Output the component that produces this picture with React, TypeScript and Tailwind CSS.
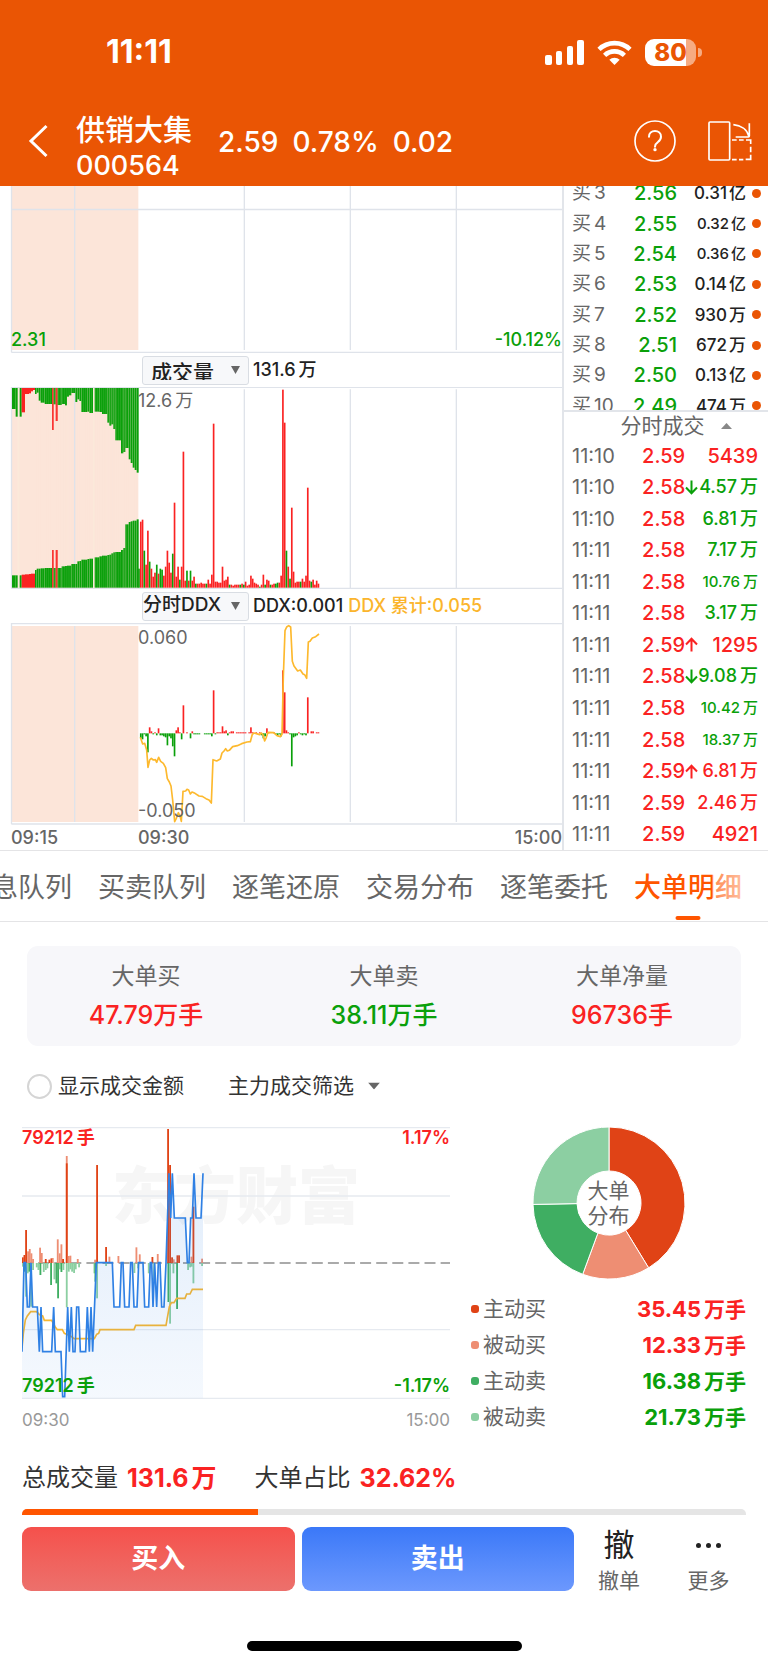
import React from 'react';

type Tone = 'r' | 'g';

const tone = { r: '#fa2222', g: '#0aa00a' };

/* ---------- market data ---------- */

const bids = [
  { level: '3', price: '2.56', volume: '0.31', unit: '亿', small: false },
  { level: '4', price: '2.55', volume: '0.32', unit: '亿', small: true },
  { level: '5', price: '2.54', volume: '0.36', unit: '亿', small: true },
  { level: '6', price: '2.53', volume: '0.14', unit: '亿', small: false },
  { level: '7', price: '2.52', volume: '930', unit: '万', small: false },
  { level: '8', price: '2.51', volume: '672', unit: '万', small: false },
  { level: '9', price: '2.50', volume: '0.13', unit: '亿', small: false },
  { level: '10', price: '2.49', volume: '474', unit: '万', small: false },
];

const trades: { time: string; price: string; arrow?: 'up' | 'down'; volume: string; unit?: string; side: Tone; size: string }[] = [
  { time: '11:10', price: '2.59', volume: '5439', side: 'r', size: 'text-[20px]' },
  { time: '11:10', price: '2.58', arrow: 'down', volume: '4.57', unit: '万', side: 'g', size: 'text-[18px]' },
  { time: '11:10', price: '2.58', volume: '6.81', unit: '万', side: 'g', size: 'text-[18px]' },
  { time: '11:11', price: '2.58', volume: '7.17', unit: '万', side: 'g', size: 'text-[18px]' },
  { time: '11:11', price: '2.58', volume: '10.76', unit: '万', side: 'g', size: 'text-[15px]' },
  { time: '11:11', price: '2.58', volume: '3.17', unit: '万', side: 'g', size: 'text-[18px]' },
  { time: '11:11', price: '2.59', arrow: 'up', volume: '1295', side: 'r', size: 'text-[20px]' },
  { time: '11:11', price: '2.58', arrow: 'down', volume: '9.08', unit: '万', side: 'g', size: 'text-[18px]' },
  { time: '11:11', price: '2.58', volume: '10.42', unit: '万', side: 'g', size: 'text-[15px]' },
  { time: '11:11', price: '2.58', volume: '18.37', unit: '万', side: 'g', size: 'text-[15px]' },
  { time: '11:11', price: '2.59', arrow: 'up', volume: '6.81', unit: '万', side: 'r', size: 'text-[18px]' },
  { time: '11:11', price: '2.59', volume: '2.46', unit: '万', side: 'r', size: 'text-[18px]' },
  { time: '11:11', price: '2.59', volume: '4921', side: 'r', size: 'text-[20px]' },
];

const tabs = ['息队列', '买卖队列', '逐笔还原', '交易分布', '逐笔委托', '大单明细'];

const stats = [
  { label: '大单买', value: '47.79万手', color: 'text-[#fa2222]' },
  { label: '大单卖', value: '38.11万手', color: 'text-[#0aa00a]' },
  { label: '大单净量', value: '96736手', color: 'text-[#fa2222]' },
];

const legend = [
  { label: '主动买', value: '35.45', dot: 'bg-[#e04316]', color: 'text-[#fa2222]' },
  { label: '被动买', value: '12.33', dot: 'bg-[#ee8e73]', color: 'text-[#fa2222]' },
  { label: '主动卖', value: '16.38', dot: 'bg-[#3fae62]', color: 'text-[#0aa00a]' },
  { label: '被动卖', value: '21.73', dot: 'bg-[#8ccfa2]', color: 'text-[#0aa00a]' },
];

// call auction: [x from, x to, lower edge of the top bar, upper edge of the bottom bar, tone]
const auction: [number, number, number, number, Tone][] = [
  [36, 47, 117, 616, 'g'], [47, 53, 140, 616, 'g'], [59, 65, 140, 616, 'g'], [65, 75, 127, 614, 'r'],
  [75, 87, 72, 613, 'r'], [87, 93, 70, 612, 'r'], [93, 99, 64, 611, 'r'], [99, 105, 60, 611, 'r'],
  [105, 110, 72, 600, 'g'], [110, 116, 68, 596, 'g'], [116, 122, 92, 596, 'g'], [122, 134, 98, 595, 'g'],
  [134, 156, 102, 594, 'g'], [156, 161, 180, 540, 'r'], [161, 167, 103, 594, 'g'], [167, 173, 153, 540, 'r'],
  [173, 185, 105, 594, 'g'], [185, 195, 102, 589, 'g'], [195, 201, 106, 588, 'g'], [201, 207, 80, 587, 'g'],
  [207, 214, 76, 587, 'g'], [214, 226, 69, 582, 'g'], [226, 232, 96, 582, 'g'], [232, 238, 88, 574, 'g'],
  [238, 244, 93, 573, 'g'], [244, 262, 126, 569, 'g'], [262, 268, 125, 567, 'g'], [268, 279, 129, 566, 'g'],
  [284, 298, 125, 562, 'g'], [298, 306, 126, 559, 'g'], [306, 322, 132, 557, 'g'], [322, 328, 158, 555, 'g'],
  [328, 334, 167, 554, 'g'], [334, 340, 163, 550, 'g'], [340, 346, 177, 547, 'g'], [346, 363, 211, 546, 'g'],
  [363, 370, 250, 540, 'g'], [370, 376, 246, 534, 'g'], [376, 386, 234, 463, 'g'], [386, 392, 268, 456, 'g'],
  [392, 398, 279, 454, 'g'], [398, 404, 293, 452, 'g'], [404, 410, 300, 452, 'g'], [410, 416, 308, 448, 'g'],
];

// one bar a minute from 09:30, negative for green
const volumes = [
  -19, 66, 68, -37, 23, 57, -26, 19, 11, 15, -23, 14, -19, -18, 12, 21, 37, 25, 15, -34, 85, 11, 21, -8, 21, 136, 7,
  -17, 7, -17, 7, 11, -4, 4, 4, 5, 4, 4, -4, 8, 4, 13, 164, 6, 6, 5, 5, 21, 7, 8, 11, -3, 3, 2, 3, 3, 3, -3, 4, -3, 6,
  2, 3, 12, 9, 5, 4, 3, -1, 3, 13, -3, 8, 7, -3, 3, 4, -4, -5, 5, 12, 198, 165, -37, 21, -9, 80, 16, 5, 6, 6, -6, 9,
  6, 12, 100, 7, -6, 8, 3, 7, 4,
];

const ddx = [
  0, -5, -6, -1, -3, -19, 6, 2, -1, 1, -2, 5, -2, -2, -3, -4, -12, -3, -5, -13, -23, 3, 6, 1, -6, 28, 0, 1, 0, -5, 2,
  -1, -1, -1, -1, 0, 0, -1, -1, -1, -1, -3, 43, -1, 1, 1, 1, 7, 2, 3, -2, 1, 2, 2, 0, 1, 1, 1, 1, 1, 1, 0, 1, 6, 1, 0,
  1, 0, 1, -2, -5, -3, 5, 1, 0, 0, 1, -1, -2, -1, -3, 63, 41, 3, 1, -1, -33, -4, -3, -2, 1, -1, -2, -1, -2, 36, 0, 2,
  2, 0, 1, 1,
];

const ddxLine =
  '421,442 428,462 434,460 440,480 444,532 449,510 454,505 460,510 466,509 470,517 476,502 482,514 490,520 497,533 502,566 508,576 513,588 518,630 524,695 529,685 535,668 540,678 544,694 549,604 557,603 561,598 566,600 571,612 576,606 585,610 597,618 607,619 618,626 627,630 634,639 639,509 650,513 661,507 666,489 672,483 677,476 682,483 688,481 698,470 712,467 725,461 741,456 751,455 757,433 762,429 769,431 779,434 784,429 789,434 794,453 799,442 804,427 821,428 831,437 841,440 846,433 850,260 855,122 860,111 866,107 872,111 877,214 882,228 893,243 901,240 909,252 914,254 920,265 925,156 930,154 937,144 947,140 957,132';

const flow: [number, number, string][] = [
  [68, 442, '#e04316'], [73, 435, '#e04316'], [78, 360, '#e04316'], [84, 424, '#ee8e73'], [89, 417, '#ee8e73'],
  [94, 430, '#ee8e73'], [99, 447, '#ee8e73'], [120, 413, '#ee8e73'], [125, 429, '#ee8e73'], [137, 447, '#e04316'],
  [148, 449, '#e04316'], [154, 445, '#e04316'], [158, 444, '#ee8e73'], [173, 388, '#ee8e73'], [179, 430, '#ee8e73'],
  [184, 403, '#ee8e73'], [189, 447, '#e04316'], [200, 138, '#ee8e73'], [200, 160, '#e04316'], [206, 438, '#ee8e73'],
  [211, 437, '#ee8e73'], [233, 447, '#ee8e73'], [285, 449, '#ee8e73'], [291, 165, '#e04316'], [318, 411, '#e04316'],
  [328, 440, '#ee8e73'], [355, 438, '#ee8e73'], [409, 412, '#ee8e73'], [419, 433, '#ee8e73'], [457, 441, '#e04316'],
  [473, 432, '#ee8e73'], [504, 57, '#e04316'], [510, 165, '#e04316'], [516, 442, '#e04316'], [521, 448, '#ee8e73'],
  [532, 436, '#e04316'], [537, 436, '#e04316'], [574, 440, '#ee8e73'], [580, 290, '#e04316'], [606, 446, '#ee8e73'],
  [68, 470, '#8ccfa2'], [73, 485, '#3fae62'], [78, 560, '#8ccfa2'], [83, 490, '#8ccfa2'], [88, 485, '#3fae62'],
  [93, 590, '#8ccfa2'], [99, 480, '#8ccfa2'], [110, 472, '#8ccfa2'], [115, 480, '#8ccfa2'], [121, 495, '#3fae62'],
  [131, 486, '#8ccfa2'], [137, 480, '#8ccfa2'], [142, 475, '#8ccfa2'], [153, 525, '#3fae62'], [163, 508, '#8ccfa2'],
  [169, 520, '#3fae62'], [174, 565, '#3fae62'], [179, 478, '#8ccfa2'], [184, 486, '#3fae62'], [190, 480, '#8ccfa2'],
  [200, 592, '#8ccfa2'], [206, 485, '#8ccfa2'], [211, 478, '#8ccfa2'], [216, 485, '#8ccfa2'], [222, 489, '#8ccfa2'],
  [227, 478, '#8ccfa2'], [237, 472, '#8ccfa2'], [283, 490, '#8ccfa2'], [286, 515, '#3fae62'], [291, 565, '#8ccfa2'],
  [318, 468, '#8ccfa2'], [403, 489, '#8ccfa2'], [414, 475, '#8ccfa2'], [446, 490, '#8ccfa2'], [462, 515, '#8ccfa2'],
  [505, 576, '#3fae62'], [510, 641, '#8ccfa2'], [520, 490, '#8ccfa2'], [531, 597, '#3fae62'], [564, 480, '#8ccfa2'],
  [570, 472, '#8ccfa2'], [575, 470, '#8ccfa2'], [580, 520, '#8ccfa2'], [606, 468, '#8ccfa2'],
];

const priceLine =
  '66,725 72,458 77,458 82,591 88,591 93,458 98,591 112,591 118,725 123,591 128,725 155,725 161,591 166,725 183,725 188,860 194,860 203,591 208,725 214,591 219,725 225,725 230,591 236,591 241,725 257,725 262,591 268,725 273,591 278,725 289,458 337,458 342,591 359,591 364,458 369,458 374,591 387,591 392,458 397,458 402,591 411,591 416,458 429,458 434,591 446,591 451,458 455,458 459,591 464,458 470,591 475,458 480,458 485,591 492,591 498,458 507,190 512,324 517,190 523,324 556,324 562,458 567,458 572,324 577,324 582,190 588,324 603,324 609,190';

const averageLine =
  '66,715 70,670 76,630 82,618 92,605 110,605 118,614 128,618 133,631 155,631 165,650 172,659 187,659 193,670 205,675 215,680 222,686 283,686 290,673 296,670 300,659 402,659 407,646 498,646 508,590 514,578 522,578 530,565 555,565 560,552 570,552 577,538 609,538';

/* ---------- icons ---------- */

const SignalIcon = () => (
  <svg className="h-[25px] w-[39px]" viewBox="0 0 39 25" fill="#fff" aria-hidden="true">
    <rect x="0" y="15" width="7" height="10" rx="2" />
    <rect x="11" y="11" width="6" height="14" rx="2" />
    <rect x="22" y="6" width="6" height="19" rx="2" />
    <rect x="32" y="0" width="7" height="25" rx="2" />
  </svg>
);

const WifiIcon = () => (
  <svg className="h-[25px] w-[35px]" viewBox="0 0 35 25" fill="none" stroke="#fff" strokeWidth="4.6" aria-hidden="true">
    <path d="M2 9.3A22.5 22.5 0 0 1 33 9.3" />
    <path d="M7.6 15.4A14.3 14.3 0 0 1 27.4 15.4" />
    <path d="M17.5 25l-5.2-5.2a7.4 7.4 0 0 1 10.4 0z" fill="#fff" stroke="none" />
  </svg>
);

const HelpIcon = () => (
  <svg className="h-[42px] w-[42px]" viewBox="0 0 126 126" fill="none" stroke="#fff" strokeWidth="5" aria-hidden="true">
    <circle cx="63" cy="63" r="60" />
    <path d="M45 50c0-11 8-17 18-17s18 6 18 17c0 9-5 13-10 17-6 4-8 7-8 13" strokeWidth="6" strokeLinecap="round" />
    <circle cx="63" cy="89" r="5" fill="#fff" stroke="none" />
  </svg>
);

const RotateIcon = () => (
  <svg className="h-[40px] w-[44px]" viewBox="0 0 132 120" fill="none" stroke="#fff" strokeWidth="5" aria-hidden="true">
    <rect x="3" y="3" width="62" height="114" rx="3" />
    <path d="M76 11c22 2 42 14 47 36M124 7v38c0 3-1 3-3 3H83" />
    <path d="M72 57h14M93 57h14M114 57h14v12M128 77v17M128 101v14h-15M106 116H93M86 116H72" />
  </svg>
);

const Arrow: React.FC<{ dir: 'up' | 'down' }> = ({ dir }) => (
  <svg
    className={dir === 'up' ? 'h-[15px] w-[13px]' : 'h-[15px] w-[13px] rotate-180'}
    viewBox="0 0 13 15"
    fill="none"
    stroke="currentColor"
    strokeWidth="2"
    aria-hidden="true"
  >
    <path d="M6.500 14.500V2M1 7.500L6.500 1.800L12 7.500" />
  </svg>
);

const Caret: React.FC<{ className: string; up?: boolean }> = ({ className, up }) => (
  <svg className={className} viewBox="0 0 12 10" preserveAspectRatio="none" fill="currentColor" aria-hidden="true">
    <path d={up ? 'M6 0l6 10H0z' : 'M0 0h12L6 10z'} />
  </svg>
);

/* ---------- pieces ---------- */

const Header = () => (
  <header className="bg-[#ea5504] text-white">
    <div className="flex h-[104px] items-center justify-between pr-[66px] pl-[106px]">
      <span className="text-[32px] font-bold">11:11</span>
      <div className="flex items-center gap-[13px]">
        <SignalIcon />
        <WifiIcon />
        <div className="flex items-center gap-[2px]">
          <div className="flex h-[27px] w-[51px] items-center justify-center rounded-[9px] bg-[linear-gradient(to_right,#fff_80%,#f6ab82_80%)] text-[24px] leading-[27px] font-extrabold text-[#ea5504]">
            80
          </div>
          <span className="h-[9px] w-[4px] rounded-r-full bg-[#f6ab82]" />
        </div>
      </div>
    </div>
    <div className="flex h-[82px] items-start pr-[16px] pl-[28px]">
      <button type="button" aria-label="返回" className="mt-[20px]">
        <svg className="h-[34px] w-[20px]" viewBox="0 0 20 34" fill="none" stroke="#fff" strokeWidth="3" aria-hidden="true">
          <path d="M18.500 2L3 17L18.500 32" />
        </svg>
      </button>
      <div className="ml-[28px] pt-[10px]">
        <h1 className="text-[29px] leading-[34px] font-medium">供销大集</h1>
        <p className="text-[27px] leading-[36px] font-medium">000564</p>
      </div>
      <p className="ml-[26px] flex gap-[14px] text-[28px] leading-[76px] font-medium">
        <span>2.59</span>
        <span>0.78%</span>
        <span>0.02</span>
      </p>
      <div className="ml-auto flex items-center gap-[32px] pt-[16px]">
        <button type="button" aria-label="帮助">
          <HelpIcon />
        </button>
        <button type="button" aria-label="横屏">
          <RotateIcon />
        </button>
      </div>
    </div>
  </header>
);

const IndicatorSelect: React.FC<{ label: string; value: string; className: string }> = ({ label, value, className }) => (
  <div className="relative">
    <select
      aria-label={label}
      className={`block h-[29px] w-[107px] appearance-none rounded-[3px] border border-[#d9dde3] bg-[#f7f8fa] font-medium text-[#222] ${className}`}
    >
      <option>{value}</option>
    </select>
    <Caret className="pointer-events-none absolute top-[10px] right-[9px] h-[8px] w-[9px] text-[#666]" />
  </div>
);

const grid = { stroke: '#dfe3ea', strokeWidth: 4 };

const MinuteCharts = () => (
  <div className="min-w-0 flex-1 border-r-2 border-[#e2e5ea]">
    {/* price */}
    <div className="relative">
      <svg className="block w-full" viewBox="0 18 1686 501">
        <rect x="35" y="18" width="380" height="492" fill="#fce5d9" />
        <path d="M34.500 18V517M224 18V510M733 18V510M1051 18V510M1369 18V510M34 88.500H1686M34 517H1686" {...grid} />
      </svg>
      <span className="absolute bottom-[3px] left-[11px] text-[18px] leading-[20px] font-medium text-[#0aa00a]">2.31</span>
      <span className="absolute right-0 bottom-[3px] text-[18px] leading-[20px] font-medium text-[#0aa00a]">-10.12%</span>
    </div>

    {/* volume */}
    <div className="flex h-[34px] items-center pl-[142px]">
      <IndicatorSelect label="指标" value="成交量" className="pb-[4px] pl-[8px] text-[21px]" />
      <span className="ml-[4px] text-[18px] leading-[20px] font-medium text-[#222]">
        131.6<span className="ml-[3px]">万</span>
      </span>
    </div>
    <div className="relative">
      <svg className="block w-full" viewBox="0 51 1686 606">
        <rect x="35" y="54" width="380" height="600" fill="#fce5d9" />
        <path d="M34.500 51V655M224 58V655M733 58V655M1051 58V655M1369 58V655M34 52H1686M34 655H1686" {...grid} />
        <path d="M53 54H59V653H53zM279 54H284V653H279z" fill="#fbe9da" />
        {auction.map(([from, to, top, bottom, t]) => (
          <g key={from} fill={tone[t]}>
            <rect x={from} y="54" width={to - from} height={top - 54} />
            <rect x={from} y={bottom} width={to - from} height={653 - bottom} />
          </g>
        ))}
        {/* hairlines between the auction bars */}
        {Array.from({ length: 52 }, (_, i) => (
          <rect key={i} x={110 + i * 5.85} y="54" width="1" height="600" fill="#fce5d9" opacity="0.3" />
        ))}
        {volumes.map((v, i) => (
          <rect key={i} x={414.5 + i * 5.33} y={653 - Math.abs(v) * 3} width="5" height={Math.abs(v) * 3} fill={v < 0 ? tone.g : tone.r} />
        ))}
      </svg>
      <span className="absolute top-[4px] left-[138px] text-[18px] leading-[20px] text-[#666]">
        12.6<span className="ml-[3px]">万</span>
      </span>
    </div>

    {/* ddx */}
    <div className="flex h-[34px] items-center pl-[142px] text-[18px] leading-[20px] font-medium">
      <IndicatorSelect label="资金指标" value="分时DDX" className="pb-[2px] text-[19px]" />
      <span className="ml-[4px] text-[#222]">DDX:0.001</span>
      <span className="ml-[5px] text-[#fbb52c]">DDX 累计:0.055</span>
    </div>
    <div className="relative">
      <svg className="block w-full" viewBox="0 99 1686 606">
        <rect x="35" y="108" width="380" height="588" fill="#fce5d9" />
        <path d="M34.500 99V702M224 108V696M733 108V696M1051 108V696M1369 108V696M34 100.500H1686M34 702H1686" {...grid} />
        {ddx.map((v, i) => (
          <rect
            key={i}
            x={414.5 + i * 5.33}
            y={v > 0 ? 430 - v * 3 : 430}
            width="5"
            height={Math.abs(v) * 3}
            fill={v < 0 ? tone.g : tone.r}
          />
        ))}
        <polyline points={ddxLine} fill="none" stroke="#fdb92e" strokeWidth="5" strokeLinejoin="round" />
      </svg>
      <span className="absolute top-[5px] left-[138px] text-[18px] leading-[20px] text-[#666]">0.060</span>
      <span className="absolute bottom-[4px] left-[138px] text-[18px] leading-[20px] text-[#666]">-0.050</span>
    </div>
    <div className="flex h-[25px] items-center pl-[11px] text-[18px] leading-[20px] font-medium text-[#666]">
      <span className="w-[127px]">09:15</span>
      <span>09:30</span>
      <span className="ml-auto">15:00</span>
    </div>
  </div>
);

const OrderBook = () => (
  <aside className="w-[204px] shrink-0">
    <div className="h-[226px] overflow-hidden border-b-2 border-[#e2e5ea]">
      <table className="-mt-[8px] h-[243px] w-full">
        <tbody>
          {bids.map((b) => (
            <tr key={b.level}>
              <th scope="row" className="w-[62px] pl-[8px] text-left text-[19px] leading-[24px] font-normal whitespace-nowrap text-[#666]">
                买<span className="ml-[3px]">{b.level}</span>
              </th>
              <td className="text-right text-[20px] leading-[24px] font-medium text-[#0aa00a]">{b.price}</td>
              <td
                className={
                  b.small
                    ? 'w-[69px] text-right text-[15px] leading-[24px] font-medium text-[#222]'
                    : 'w-[69px] text-right text-[17px] leading-[24px] font-medium text-[#222]'
                }
              >
                {b.volume}
                <span className="ml-[2px]">{b.unit}</span>
              </td>
              <td className="w-[22px] pl-[6px]">
                <span className="block h-[9px] w-[9px] rounded-full bg-[#ea5504]" />
              </td>
            </tr>
          ))}
        </tbody>
      </table>
    </div>
    <button type="button" className="flex h-[28px] w-full items-center justify-center gap-[16px] pl-[20px] text-[21px] leading-[28px] text-[#666]">
      分时成交
      <Caret up className="h-[6px] w-[11px] text-[#888]" />
    </button>
    <table className="h-[410px] w-full">
      <tbody>
        {trades.map((t, i) => (
          <tr key={i}>
            <td className="w-[70px] pl-[8px] text-[20px] leading-[24px] text-[#666]">{t.time}</td>
            <td className="w-[52px] text-right text-[20px] leading-[24px] font-medium text-[#fa2222]">{t.price}</td>
            <td
              className={`pr-[10px] leading-[24px] font-medium whitespace-nowrap ${t.size} ${t.side === 'r' ? 'text-[#fa2222]' : 'text-[#0aa00a]'}`}
            >
              <span className="flex items-center justify-between">
                <span className="flex">{t.arrow && <Arrow dir={t.arrow} />}</span>
                <span>
                  {t.volume}
                  {t.unit && <span className="ml-[3px]">{t.unit}</span>}
                </span>
              </span>
            </td>
          </tr>
        ))}
      </tbody>
    </table>
  </aside>
);

const Tabs = () => (
  <nav className="relative flex h-[72px] justify-end gap-[26px] overflow-hidden border-y border-[#e4e4e6] pr-[26px]">
    {tabs.map((tab) => {
      const active = tab === '大单明细';
      return (
        <button
          key={tab}
          type="button"
          className={
            active
              ? 'relative shrink-0 pt-[4px] text-[27px] font-medium text-[#ff5500]'
              : 'relative shrink-0 pt-[4px] text-[27px] text-[#666]'
          }
        >
          {tab}
          {active && <span className="absolute bottom-[1px] left-1/2 h-[4px] w-[25px] -translate-x-1/2 rounded-full bg-[#ff5500]" />}
        </button>
      );
    })}
    <span className="pointer-events-none absolute inset-y-0 right-0 w-[56px] bg-gradient-to-r from-white/30 to-white/90" />
  </nav>
);

const FlowChart = () => (
  <div className="min-w-0 flex-1">
    <div className="relative">
      <span className="absolute top-[29px] left-[90px] font-['Noto_Sans_CJK_SC',sans-serif] text-[62px] leading-[72px] font-black text-[#f6f6f6]">
        东方财富
      </span>
      <svg className="relative block w-full" viewBox="66 51 1284 816">
        <defs>
          <linearGradient id="flow-area" x1="0" y1="0" x2="0" y2="1">
            <stop offset="0" stopColor="#2f80e4" stopOpacity="0.14" />
            <stop offset="1" stopColor="#2f80e4" stopOpacity="0.05" />
          </linearGradient>
        </defs>
        <path d="M66 53H1350M66 258H1350M66 659H1350M66 865H1350" stroke="#e6eaf0" strokeWidth="4" />
        <path d="M66 459H1350" stroke="#8f8f8f" strokeWidth="5" strokeDasharray="33 15.300" />
        {flow.map(([x, y, color], i) => (
          <rect key={i} x={x - 2.5} y={Math.min(y, 459)} width="5.5" height={Math.abs(459 - y)} fill={color} />
        ))}
        <polyline points={averageLine} fill="none" stroke="#f8b62f" strokeWidth="5" />
        <polygon points={`66,865 ${priceLine} 609,865`} fill="url(#flow-area)" />
        <polyline points={priceLine} fill="none" stroke="#2f80e4" strokeWidth="5" />
      </svg>
      <div className="absolute inset-0 flex flex-col justify-between pt-px pb-[3px] text-[18px] leading-[20px] font-semibold">
        <p className="flex justify-between text-[#fa2222]">
          <span>
            79212<span className="ml-[3px]">手</span>
          </span>
          <span>1.17%</span>
        </p>
        <p className="flex justify-between text-[#0aa00a]">
          <span>
            79212<span className="ml-[3px]">手</span>
          </span>
          <span>-1.17%</span>
        </p>
      </div>
    </div>
    <div className="mt-[9px] flex justify-between text-[17px] leading-[24px] text-[#999]">
      <span>09:30</span>
      <span>15:00</span>
    </div>
  </div>
);

const shares = [
  { value: 35.45, color: '#e04316' },
  { value: 12.33, color: '#ee8e73' },
  { value: 16.38, color: '#3fae62' },
  { value: 21.73, color: '#8ccfa2' },
];

const Donut = () => {
  const total = shares.reduce((sum, s) => sum + s.value, 0);
  let angle = -Math.PI / 2;
  const slices = shares.map((s) => {
    const end = angle + (s.value / total) * Math.PI * 2;
    const point = (a: number, r: number) => `${(76 + r * Math.cos(a)).toFixed(2)} ${(76 + r * Math.sin(a)).toFixed(2)}`;
    const d = `M${point(angle, 76)}A76 76 0 0 1 ${point(end, 76)}L${point(end, 32)}A32 32 0 0 0 ${point(angle, 32)}Z`;
    angle = end;
    return { d, color: s.color };
  });
  return (
    <div className="relative mx-auto h-[152px] w-[152px]">
      <svg className="h-full w-full" viewBox="0 0 152 152" aria-hidden="true">
        {slices.map((s) => (
          <path key={s.color} d={s.d} fill={s.color} stroke="#fff" strokeWidth="1" />
        ))}
      </svg>
      <p className="absolute inset-0 flex items-center justify-center text-center text-[21px] leading-[25px] text-[#666]">
        大单
        <br />
        分布
      </p>
    </div>
  );
};

export default function App() {
  return (
    <div className="bg-white font-[Inter,'Noto_Sans_CJK_SC',sans-serif] text-[#333]">
      <Header />

      <main>
        <section className="flex">
          <MinuteCharts />
          <OrderBook />
        </section>

        <Tabs />

        <section className="mx-[27px] mt-[24px] grid h-[100px] grid-cols-3 content-center rounded-[11px] bg-[#f7f7fa] text-center">
          {stats.map((s) => (
            <div key={s.label}>
              <p className="text-[23px] leading-[38px] text-[#666]">{s.label}</p>
              <p className={`text-[25px] leading-[40px] font-medium ${s.color}`}>{s.value}</p>
            </div>
          ))}
        </section>

        <div className="mt-[24px] flex h-[32px] items-center pl-[27px] text-[21px]">
          <input id="show-amount" type="radio" className="h-[25px] w-[25px] appearance-none rounded-full border-2 border-[#d5d5d5]" />
          <label htmlFor="show-amount" className="ml-[6px]">
            显示成交金额
          </label>
          <div className="relative ml-[44px]">
            <select aria-label="主力成交筛选" className="block appearance-none pr-[26px]">
              <option>主力成交筛选</option>
            </select>
            <Caret className="pointer-events-none absolute top-1/2 right-0 h-[7px] w-[12px] -translate-y-1/2 text-[#666]" />
          </div>
        </div>

        <section className="mt-[25px] flex gap-[21px] pr-[22px] pl-[22px]">
          <FlowChart />
          <div className="w-[275px] shrink-0">
            <Donut />
            <dl className="mt-[12px] text-[21px] leading-[36px]">
              {legend.map((l) => (
                <div key={l.label} className="flex h-[36px] items-center">
                  <span className={`mr-[4px] h-[8px] w-[8px] rounded-[3px] ${l.dot}`} />
                  <dt className="text-[#666]">{l.label}</dt>
                  <dd className={`ml-auto text-[22px] font-bold ${l.color}`}>
                    {l.value}
                    <span className="ml-[3px] text-[21px]">万手</span>
                  </dd>
                </div>
              ))}
            </dl>
          </div>
        </section>

        <section className="px-[22px]">
          <p className="mt-[25px] flex h-[36px] items-center text-[24px] leading-[36px]">
            <span>总成交量</span>
            <strong className="ml-[9px] text-[25px] text-[#fa2222]">
              131.6<span className="ml-[3px]">万</span>
            </strong>
            <span className="ml-[38px]">大单占比</span>
            <strong className="ml-[9px] text-[25px] text-[#fa2222]">32.62%</strong>
          </p>
          <div className="mt-[13px] h-[6px] overflow-hidden rounded-t-[5px] bg-[#e5e5e5]">
            <div className="h-full bg-[#ff5500]" style={{ width: '32.62%' }} />
          </div>
        </section>
      </main>

      <footer className="pb-[14px]">
        <div className="mt-[12px] flex h-[64px] items-stretch pl-[22px]">
          <button type="button" className="flex-1 rounded-[9px] bg-gradient-to-b from-[#f5504b] to-[#ec706c] text-[27px] font-bold text-white">
            买入
          </button>
          <button type="button" className="ml-[7px] flex-1 rounded-[9px] bg-gradient-to-b from-[#3a78f8] to-[#6c98fd] text-[27px] font-bold text-white">
            卖出
          </button>
          <button type="button" className="flex w-[90px] flex-col items-center justify-between text-[#666]">
            <span className="text-[31px] leading-[36px] text-[#222]">撤</span>
            <span className="text-[21px] leading-[20px]">撤单</span>
          </button>
          <button type="button" className="mr-[15px] flex w-[89px] flex-col items-center justify-between text-[#666]">
            <span className="flex h-[36px] items-center gap-[5px]">
              <i className="h-[5px] w-[5px] rounded-full bg-[#222]" />
              <i className="h-[5px] w-[5px] rounded-full bg-[#222]" />
              <i className="h-[5px] w-[5px] rounded-full bg-[#222]" />
            </span>
            <span className="text-[21px] leading-[20px]">更多</span>
          </button>
        </div>
        <div className="mx-auto mt-[50px] h-[10px] w-[275px] rounded-full bg-black" />
      </footer>
    </div>
  );
}
